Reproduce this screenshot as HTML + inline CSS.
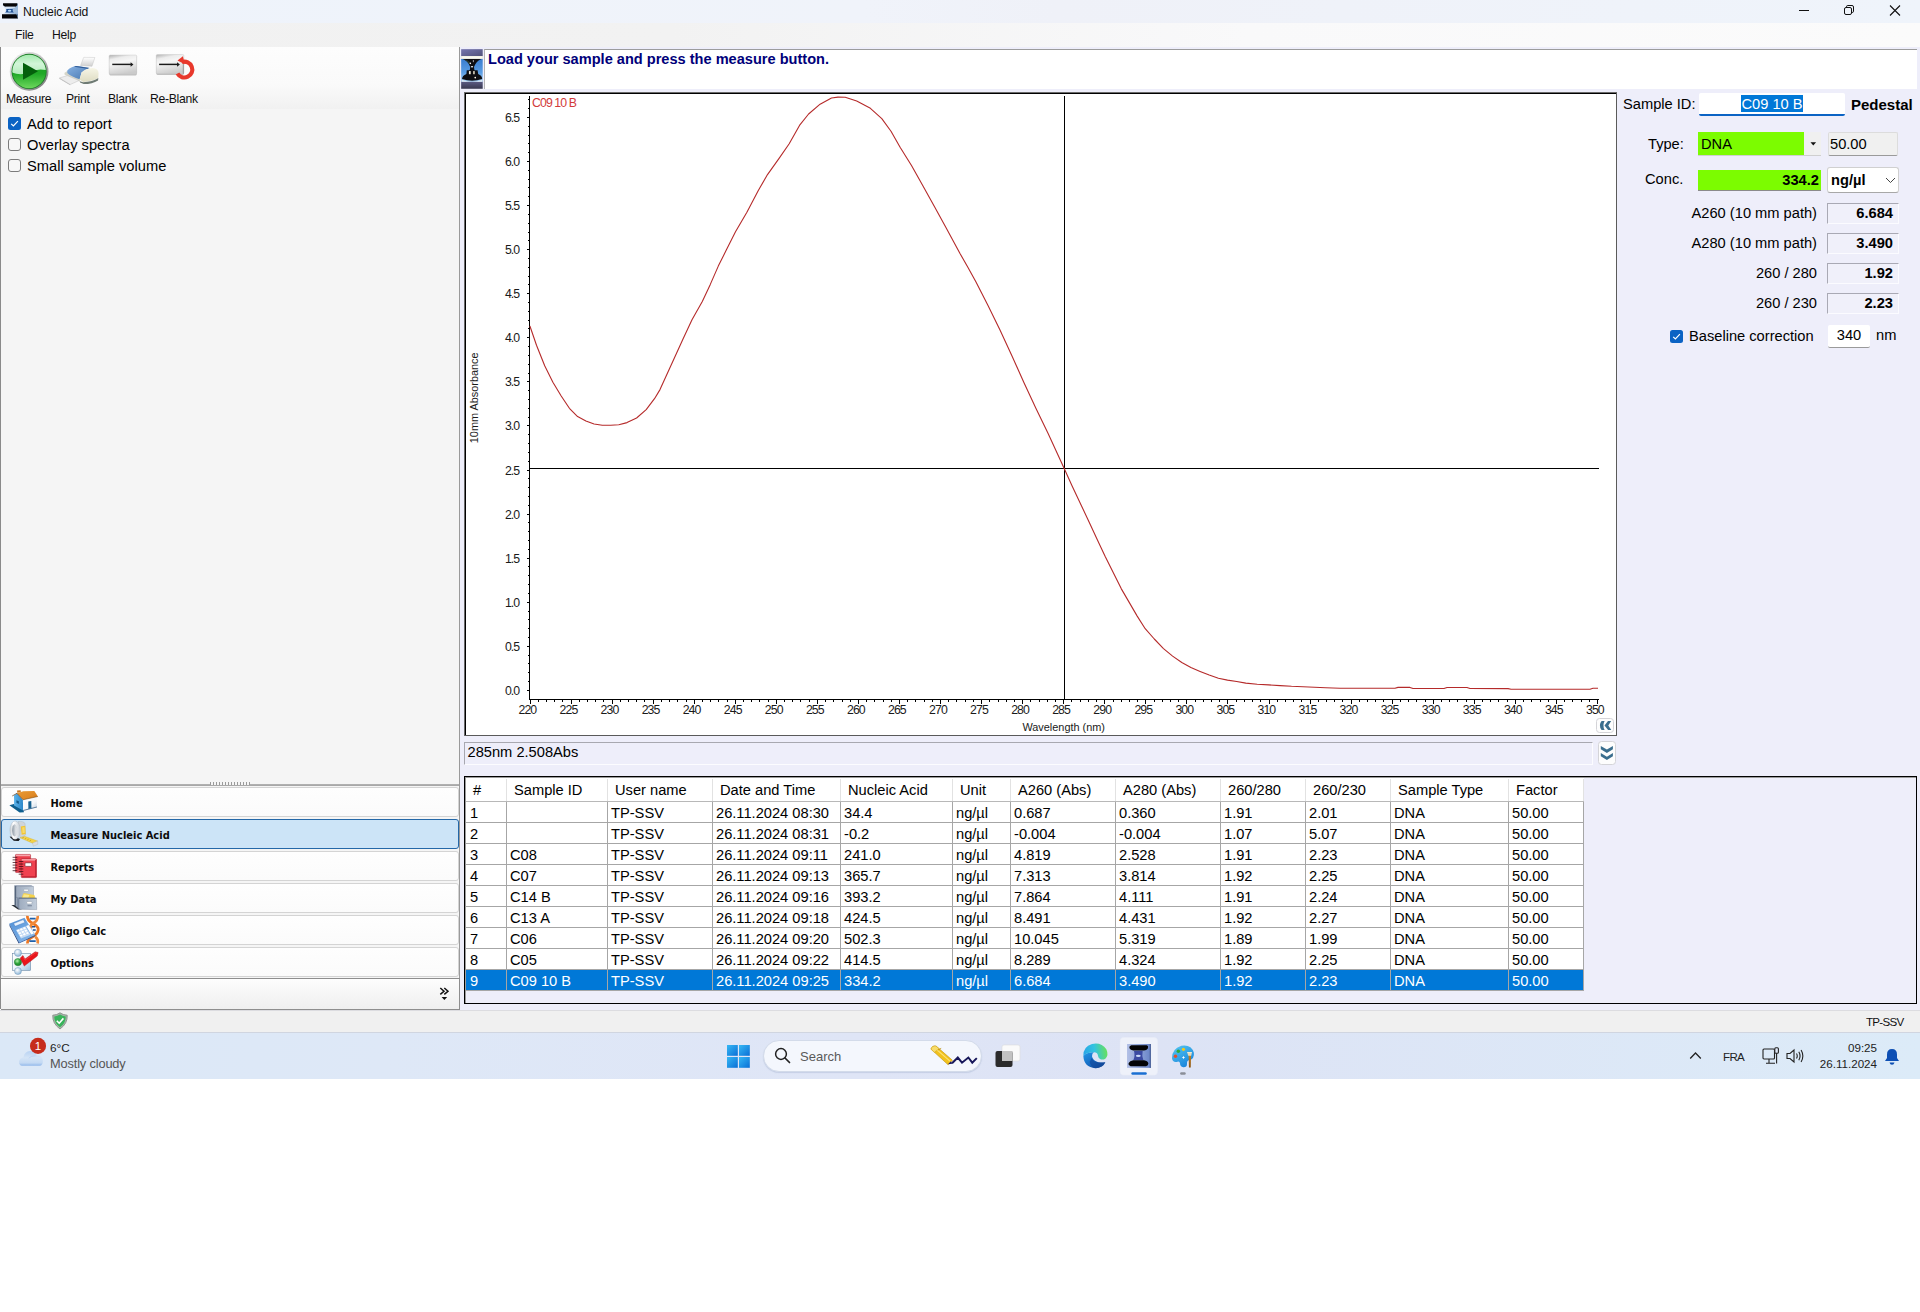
<!DOCTYPE html>
<html lang="en"><head><meta charset="utf-8"><title>Nucleic Acid</title>
<style>
*{box-sizing:border-box;margin:0;padding:0}
html,body{width:1920px;height:1312px;background:#fff;overflow:hidden}
body{font-family:"Liberation Sans",sans-serif;color:#000;position:relative}
.a{position:absolute}
.t{position:absolute;white-space:nowrap;line-height:1}
#titlebar{left:0;top:0;width:1920px;height:23px;background:linear-gradient(90deg,#eef3fb 0%,#f0f3fa 45%,#eff1f8 55%,#eff4fb 100%)}
#menubar{left:0;top:23px;width:1920px;height:24px;background:linear-gradient(90deg,#f1f1f1 0%,#f2f2f2 35%,#f9f9fa 65%,#fbfbfb 100%)}
#leftpanel{left:0;top:47px;width:460px;height:962px;background:#f5f5f5;border-left:1px solid #8a8a8a;border-right:1px solid #9a9a9a}
#ltool{left:0;top:0;width:458px;height:62px;background:linear-gradient(180deg,#fdfdfd 0%,#fafafa 60%,#f1f1f1 100%)}
#main{left:460px;top:47px;width:1460px;height:963px;background:#eeeefa}
#status{left:0;top:1010px;width:1920px;height:23px;background:#f0f0f0;border-top:1px solid #dcdce0;border-bottom:1px solid #d0d5e0}
#taskbar{left:0;top:1033px;width:1920px;height:46px;background:linear-gradient(90deg,#dbe8f7 0%,#dee8f7 20%,#dfe5f6 45%,#dde3f5 60%,#dcebf8 100%)}
.ui12{font-size:12px}
.ar{font-size:14.67px}
</style></head><body>

<div id="titlebar" class="a"></div>
<svg class="a" style="left:0;top:0" width="30" height="24" viewBox="0 0 1640 1312">
<defs><linearGradient id="ai" x1="0" y1="0" x2="1" y2="0"><stop offset="0" stop-color="#e8f1fb"/><stop offset="0.5" stop-color="#b9d2ee"/><stop offset="1" stop-color="#86a9cf"/></linearGradient></defs>
<rect x="120" y="200" width="860" height="800" fill="url(#ai)"/>
<polygon points="120,300 300,480 300,640 120,780" fill="#f2f7fd"/>
<polygon points="980,300 740,480 740,660 980,780" fill="#9dbbdc"/>
<polygon points="165,180 945,180 945,292 860,368 280,368 165,292" fill="#050507"/>
<polygon points="280,368 860,368 800,430 330,430" fill="#dfeaf6"/>
<path d="M340 495 H700 L690 560 Q690 620 760 690 H280 Q350 620 350 560 Z" fill="#1f4f92"/>
<ellipse cx="525" cy="585" rx="98" ry="52" fill="#b9dcfb"/>
<polygon points="110,780 900,780 985,1010 110,1010" fill="#050507"/>
<polygon points="900,780 985,780 985,1010" fill="#54708f"/>
</svg>
<div class="t" style="left:23px;top:6px;font-size:12.2px;letter-spacing:-0.1px;color:#111">Nucleic Acid</div>
<svg class="a" style="left:1790px;top:0" width="130" height="23" viewBox="0 0 130 23" fill="none" stroke="#111" stroke-width="1">
<path d="M9 10.5 H19"/>
<rect x="54.5" y="7.5" width="7" height="7" rx="1.5"/>
<path d="M56.5 7.5 V6.8 Q56.5 5.5 57.8 5.5 H62 Q63.5 5.5 63.5 7 V11.2 Q63.5 12.5 62.2 12.5 H61.5"/>
<path d="M100 5.5 L110 15.5 M110 5.5 L100 15.5" stroke-width="1.1"/>
</svg>
<div id="menubar" class="a"></div>
<div class="t" style="left:15px;top:29px;font-size:12.2px;letter-spacing:-0.25px;color:#111">File</div>
<div class="t" style="left:52px;top:29px;font-size:12.2px;letter-spacing:-0.25px;color:#111">Help</div>
<div id="leftpanel" class="a"><div id="ltool" class="a"></div></div>
<svg class="a" style="left:4px;top:48px" width="100" height="48" viewBox="0 0 1920 922">
<defs>
<linearGradient id="mr" x1="0.15" y1="0.1" x2="0.85" y2="0.9"><stop offset="0" stop-color="#e9e9e9"/><stop offset="0.5" stop-color="#bdbdbd"/><stop offset="1" stop-color="#7f7f7f"/></linearGradient>
<linearGradient id="mt" x1="0" y1="0" x2="0" y2="1"><stop offset="0" stop-color="#9be8a6"/><stop offset="0.5" stop-color="#d2f5d8"/><stop offset="1" stop-color="#b4ecbb"/></linearGradient>
<linearGradient id="mb" x1="0" y1="0" x2="0" y2="1"><stop offset="0" stop-color="#149a1c"/><stop offset="0.55" stop-color="#1fa826"/><stop offset="1" stop-color="#74dc62"/></linearGradient>
<clipPath id="mc"><circle cx="482" cy="450" r="322"/></clipPath>
<linearGradient id="pp" x1="0" y1="0" x2="0" y2="1"><stop offset="0" stop-color="#ffffff"/><stop offset="1" stop-color="#cfcfcf"/></linearGradient>
<linearGradient id="pb" x1="0" y1="0" x2="1" y2="1"><stop offset="0" stop-color="#86b1e2"/><stop offset="1" stop-color="#4877b0"/></linearGradient>
<linearGradient id="pc" x1="0" y1="0" x2="0" y2="1"><stop offset="0" stop-color="#f6f5e6"/><stop offset="1" stop-color="#dedcc2"/></linearGradient>
</defs>
<circle cx="482" cy="450" r="372" fill="url(#mr)"/>
<circle cx="482" cy="450" r="338" fill="#1d7a28"/>
<g clip-path="url(#mc)">
<rect x="150" y="120" width="680" height="680" fill="url(#mb)"/>
<path d="M150 100 H830 V430 Q650 380 482 470 Q320 540 150 470 Z" fill="url(#mt)"/>
</g>
<polygon points="365,285 365,612 652,446" fill="#04600c"/>
<polygon points="1530,180 1745,182 1690,352 1470,336" fill="url(#pp)" stroke="#bdbdbd" stroke-width="8"/>
<polygon points="1160,482 1215,440 1460,600 1458,645 1165,515" fill="#d6d6c9"/>
<path d="M1215 432 Q1300 338 1425 345 L1645 382 Q1560 402 1490 472 L1452 602 Q1300 560 1215 482 Z" fill="url(#pb)"/>
<path d="M1380 345 L1645 382 L1600 400 L1345 362 Z" fill="#2f5a94"/>
<path d="M1490 472 Q1560 396 1700 386 Q1812 400 1816 482 L1810 572 Q1700 642 1520 652 L1452 606 Z" fill="url(#pc)"/>
<path d="M1455 640 L1520 656 Q1700 650 1812 578 L1806 622 Q1700 692 1530 692 L1460 662 Z" fill="#6f7b74"/>
<polygon points="1065,575 1215,530 1442,625 1270,702" fill="#ededed" stroke="#b4b4b4" stroke-width="8"/>
<polygon points="1065,575 1270,702 1272,716 1062,590" fill="#b9b9b9"/>
</svg>
<svg class="a" style="left:100px;top:48px" width="100" height="48" viewBox="0 0 1920 922">
<defs>
<linearGradient id="bk" x1="0.2" y1="0" x2="0.5" y2="1"><stop offset="0" stop-color="#bdbdbd"/><stop offset="0.18" stop-color="#ececec"/><stop offset="0.4" stop-color="#f6f6f6"/><stop offset="1" stop-color="#cbcbcb"/></linearGradient>
</defs>
<rect x="178" y="150" width="528" height="378" rx="22" fill="#8f8f8f" opacity="0.55"/>
<rect x="175" y="135" width="530" height="368" rx="22" fill="url(#bk)" stroke="#c4c4c4" stroke-width="8"/>
<path d="M235 315 H600" stroke="#1a1a1a" stroke-width="28"/><polygon points="588,272 642,315 588,358" fill="#1a1a1a"/>
<rect x="1083" y="140" width="528" height="378" rx="22" fill="#8f8f8f" opacity="0.55"/>
<rect x="1080" y="125" width="530" height="372" rx="22" fill="url(#bk)" stroke="#c4c4c4" stroke-width="8"/>
<rect x="1590" y="280" width="20" height="215" fill="#9a9a9a"/>
<path d="M1135 315 H1495" stroke="#1a1a1a" stroke-width="28"/><polygon points="1480,272 1534,315 1480,358" fill="#1a1a1a"/>
<path d="M1574 270 A152 152 0 1 1 1488 490" fill="none" stroke="#e8382c" stroke-width="80"/>
<polygon points="1488,238 1592,160 1628,310" fill="#e8382c"/>
</svg>
<div class="t" style="left:6px;top:93px;font-size:12.2px;letter-spacing:-0.3px;color:#111">Measure</div>
<div class="t" style="left:66px;top:93px;font-size:12.2px;letter-spacing:-0.3px;color:#111">Print</div>
<div class="t" style="left:108px;top:93px;font-size:12.2px;letter-spacing:-0.3px;color:#111">Blank</div>
<div class="t" style="left:150px;top:93px;font-size:12.2px;letter-spacing:-0.3px;color:#111">Re-Blank</div>
<svg class="a" style="left:8px;top:117px" width="13" height="13" viewBox="0 0 13 13"><rect x="0" y="0" width="13" height="13" rx="2.5" fill="#0b63c4"/><path d="M3.2 6.8 L5.4 9 L9.9 4.2" fill="none" stroke="#fff" stroke-width="1.2"/></svg>
<div class="t ar" style="left:27px;top:117px">Add to report</div>
<svg class="a" style="left:8px;top:138px" width="13" height="13" viewBox="0 0 13 13"><rect x="0.5" y="0.5" width="12" height="12" rx="2.5" fill="#f7f7f7" stroke="#7c7c7c" stroke-width="1"/></svg>
<div class="t ar" style="left:27px;top:138px">Overlay spectra</div>
<svg class="a" style="left:8px;top:159px" width="13" height="13" viewBox="0 0 13 13"><rect x="0.5" y="0.5" width="12" height="12" rx="2.5" fill="#f7f7f7" stroke="#7c7c7c" stroke-width="1"/></svg>
<div class="t ar" style="left:27px;top:159px">Small sample volume</div>
<div class="a" style="left:1px;top:784px;width:458px;height:2px;background:linear-gradient(180deg,#b4b4b4,#a4a4a4)"></div>
<div class="a" style="left:210px;top:782px;width:40px;height:3px;background:repeating-linear-gradient(90deg,#9a9a9a 0 1px,#f5f5f5 1px 3px)"></div>
<div class="a" style="left:1px;top:787px;width:458px;height:30px;border-radius:3px;background:linear-gradient(180deg,#fefefe,#fbfbfb);border:1px solid #d4d4d4"><div class="t" style="left:48.5px;top:10px;font-family:'DejaVu Sans Condensed','DejaVu Sans','Liberation Sans',sans-serif;font-stretch:condensed;font-weight:bold;font-size:11px;color:#0c0c0c">Home</div></div>
<div class="a" style="left:1px;top:819px;width:458px;height:30px;border-radius:3px;background:#cce4f7;border:1px solid #2468a8"><div class="t" style="left:48.5px;top:10px;font-family:'DejaVu Sans Condensed','DejaVu Sans','Liberation Sans',sans-serif;font-stretch:condensed;font-weight:bold;font-size:11px;color:#0c0c0c">Measure Nucleic Acid</div></div>
<div class="a" style="left:1px;top:851px;width:458px;height:30px;border-radius:3px;background:linear-gradient(180deg,#fefefe,#fbfbfb);border:1px solid #d4d4d4"><div class="t" style="left:48.5px;top:10px;font-family:'DejaVu Sans Condensed','DejaVu Sans','Liberation Sans',sans-serif;font-stretch:condensed;font-weight:bold;font-size:11px;color:#0c0c0c">Reports</div></div>
<div class="a" style="left:1px;top:883px;width:458px;height:30px;border-radius:3px;background:linear-gradient(180deg,#fefefe,#fbfbfb);border:1px solid #d4d4d4"><div class="t" style="left:48.5px;top:10px;font-family:'DejaVu Sans Condensed','DejaVu Sans','Liberation Sans',sans-serif;font-stretch:condensed;font-weight:bold;font-size:11px;color:#0c0c0c">My Data</div></div>
<div class="a" style="left:1px;top:915px;width:458px;height:30px;border-radius:3px;background:linear-gradient(180deg,#fefefe,#fbfbfb);border:1px solid #d4d4d4"><div class="t" style="left:48.5px;top:10px;font-family:'DejaVu Sans Condensed','DejaVu Sans','Liberation Sans',sans-serif;font-stretch:condensed;font-weight:bold;font-size:11px;color:#0c0c0c">Oligo Calc</div></div>
<div class="a" style="left:1px;top:947px;width:458px;height:30px;border-radius:3px;background:linear-gradient(180deg,#fefefe,#fbfbfb);border:1px solid #d4d4d4"><div class="t" style="left:48.5px;top:10px;font-family:'DejaVu Sans Condensed','DejaVu Sans','Liberation Sans',sans-serif;font-stretch:condensed;font-weight:bold;font-size:11px;color:#0c0c0c">Options</div></div>
<svg class="a" style="left:4px;top:786px" width="40" height="64" viewBox="0 0 820 1312">
<defs>
<linearGradient id="hw1" x1="0" y1="0" x2="1" y2="0"><stop offset="0" stop-color="#5db4ea"/><stop offset="1" stop-color="#2b86c8"/></linearGradient>
<linearGradient id="hw2" x1="0" y1="0" x2="1" y2="1"><stop offset="0" stop-color="#ffffff"/><stop offset="0.6" stop-color="#f4f7fa"/><stop offset="1" stop-color="#b9c9d9"/></linearGradient>
<linearGradient id="hr" x1="0" y1="0" x2="1" y2="1"><stop offset="0" stop-color="#e89a35"/><stop offset="0.6" stop-color="#e08a26"/><stop offset="1" stop-color="#c96f16"/></linearGradient>
<linearGradient id="tp1" x1="0" y1="0" x2="1" y2="0"><stop offset="0" stop-color="#c9d0d6"/><stop offset="0.35" stop-color="#ffffff"/><stop offset="1" stop-color="#c4cbd2"/></linearGradient>
<linearGradient id="tp2" x1="0" y1="0" x2="1" y2="0"><stop offset="0" stop-color="#8d98a3"/><stop offset="1" stop-color="#f3f5f7"/></linearGradient>
</defs>
<polygon points="110,395 200,368 395,470 410,540 320,545" fill="#0f5f8e"/>
<polygon points="205,195 265,150 388,290 392,500 207,402" fill="url(#hw1)"/>
<polygon points="255,292 305,312 305,368 255,345" fill="#135a8a"/>
<polygon points="388,290 668,235 675,435 392,505" fill="url(#hw2)"/>
<polygon points="392,490 675,420 675,440 392,510" fill="#5b7e9e"/>
<polygon points="498,318 560,305 562,455 500,470" fill="#17608f"/>
<polygon points="268,92 340,85 345,128 272,140" fill="#c8741c"/>
<polygon points="265,150 395,108 622,104 695,215 392,282" fill="url(#hr)"/>
<path d="M392 282 L695 215" stroke="#7a4a10" stroke-width="12"/>
<path d="M168 205 L265 150 L392 284" stroke="#5b3714" stroke-width="14" fill="none"/>
<polygon points="115,1040 185,1030 330,1085 300,1128 200,1120" fill="#15171a"/>
<path d="M290 728 Q410 715 432 775 L442 1005 L330 1062 Z" fill="#cfd5db" stroke="#9aa3ac" stroke-width="6"/>
<polygon points="345,830 435,815 445,985 362,1000" fill="#f2c531"/>
<polygon points="372,850 420,842 428,960 380,970" fill="#f7da6a"/>
<ellipse cx="228" cy="905" rx="106" ry="188" fill="url(#tp1)" stroke="#a4adb6" stroke-width="7"/>
<ellipse cx="215" cy="908" rx="47" ry="120" fill="url(#tp2)" stroke="#9aa3ac" stroke-width="5"/>
<polygon points="325,1062 420,1030 690,1130 600,1178" fill="#f4d348" stroke="#c9a21f" stroke-width="6"/>
<path d="M405 1052 l-28 14 M455 1072 l-28 14 M505 1092 l-28 14 M555 1110 l-28 14" stroke="#9a7d15" stroke-width="10"/>
<polygon points="585,1168 690,1125 695,1195 600,1235" fill="#d9dde1" stroke="#a5acb3" stroke-width="6"/>
</svg>
<svg class="a" style="left:4px;top:850px" width="40" height="64" viewBox="0 0 820 1312">
<defs>
<linearGradient id="cb1" x1="0" y1="0" x2="1" y2="0"><stop offset="0" stop-color="#9eacbf"/><stop offset="1" stop-color="#c3cedb"/></linearGradient>
</defs>
<rect x="235" y="90" width="310" height="372" rx="14" fill="#ea3f4c" stroke="#9c1926" stroke-width="9"/>
<rect x="245" y="98" width="290" height="30" fill="#f8a5ac"/>
<path d="M185 150 h80 M185 202 h80 M185 256 h80 M185 310 h80 M185 366 h80 M185 424 h80" stroke="#3a0810" stroke-width="15" stroke-linecap="round"/>
<rect x="352" y="180" width="314" height="386" rx="16" fill="#f0414f" stroke="#9c1926" stroke-width="10"/>
<rect x="362" y="188" width="292" height="28" fill="#f9a8ae"/>
<rect x="640" y="200" width="22" height="350" fill="#b81f2e"/><rect x="370" y="540" width="290" height="20" fill="#b81f2e"/>
<rect x="430" y="262" width="136" height="74" rx="20" fill="#fff" stroke="#7a1420" stroke-width="13"/>
<path d="M310 236 h78 M310 288 h78 M310 338 h78 M310 388 h78 M310 442 h78 M310 496 h78" stroke="#3a0810" stroke-width="15" stroke-linecap="round"/>
<polygon points="150,1130 215,1128 365,1215 290,1222" fill="#2a3038"/>
<polygon points="215,725 252,742 252,1152 215,1132" fill="#55657c"/>
<polygon points="215,725 558,722 606,746 252,746" fill="#8796ac"/>
<rect x="252" y="746" width="354" height="235" fill="url(#cb1)" stroke="#5f6f86" stroke-width="6"/>
<rect x="405" y="806" width="96" height="40" rx="7" fill="#fff" stroke="#7b8797" stroke-width="7"/>
<polygon points="252,962 306,986 311,1216 252,1152" fill="#7f8ea4"/>
<path d="M365 980 L392 895 Q402 880 432 886 L618 922 Q640 932 632 986 Z" fill="#f5d24a"/>
<path d="M385 975 L405 905 L520 925 L500 980 Z" fill="#fbe88c"/>
<polygon points="306,986 666,986 671,1222 311,1216" fill="url(#cb1)" stroke="#5f6f86" stroke-width="7"/>
<rect x="306" y="980" width="360" height="14" fill="#4f5d72"/>
<rect x="466" y="1056" width="110" height="50" rx="22" fill="#fff" stroke="#7b8797" stroke-width="8"/>
<rect x="482" y="1132" width="90" height="22" fill="#76849a"/>
</svg>
<svg class="a" style="left:4px;top:914px" width="40" height="64" viewBox="0 0 820 1312">
<defs>
<linearGradient id="cal" x1="0" y1="0" x2="1" y2="1"><stop offset="0" stop-color="#4f8fd6"/><stop offset="1" stop-color="#8dbcec"/></linearGradient>
<linearGradient id="op1" x1="0" y1="0" x2="1" y2="1"><stop offset="0" stop-color="#ffffff"/><stop offset="0.5" stop-color="#eef5fb"/><stop offset="1" stop-color="#9cc3e0"/></linearGradient>
<radialGradient id="opc" cx="40%" cy="35%" r="70%"><stop offset="0" stop-color="#ffffff"/><stop offset="1" stop-color="#86b2d6"/></radialGradient>
<radialGradient id="opg" cx="40%" cy="35%" r="70%"><stop offset="0" stop-color="#b6f0b0"/><stop offset="0.5" stop-color="#2fa53c"/><stop offset="1" stop-color="#157a24"/></radialGradient>
</defs>
<path d="M480 40 Q470 130 590 195 Q715 255 700 330 Q680 420 590 465 Q475 520 480 605" fill="none" stroke="#ee7722" stroke-width="56"/>
<path d="M690 40 Q705 130 590 195 Q520 235 560 300 M640 470 Q710 520 690 605" fill="none" stroke="#f08a3a" stroke-width="56"/>
<path d="M528 95 h120 M520 555 h130" stroke="#1f5fa8" stroke-width="34"/>
<path d="M570 262 h70 M590 330 h60" stroke="#1f4f90" stroke-width="30"/>
<polygon points="105,200 420,75 640,430 310,585" fill="url(#cal)"/>
<polygon points="105,200 118,250 302,603 310,585" fill="#183c7c"/>
<polygon points="310,585 640,430 646,452 302,606" fill="#2b5ea8"/>
<polygon points="195,195 395,115 430,172 230,252" fill="#eaf3fd" stroke="#2f68b4" stroke-width="8"/>
<polygon points="245,330 440,250 545,425 350,500" fill="#c4daf4"/>
<g fill="#ffffff">
<polygon points="262,335 305,318 325,350 282,368"/><polygon points="325,310 368,292 388,325 345,343"/><polygon points="388,284 430,267 450,300 408,317"/>
<polygon points="292,385 335,368 355,400 312,418"/><polygon points="355,360 398,342 418,375 375,393"/><polygon points="418,334 460,317 480,350 438,367"/>
<polygon points="322,435 365,418 385,450 342,468"/><polygon points="385,410 428,392 448,425 405,443"/><polygon points="448,384 490,367 510,400 468,417"/>
<polygon points="452,245 505,225 612,400 558,422"/>
</g>
<rect x="172" y="806" width="372" height="350" fill="url(#op1)" stroke="#5f7f9f" stroke-width="11"/>
<circle cx="286" cy="796" r="74" fill="url(#opc)" stroke="#6f93b5" stroke-width="9"/>
<circle cx="286" cy="1170" r="72" fill="url(#opc)" stroke="#6f93b5" stroke-width="9"/>
<circle cx="286" cy="986" r="76" fill="url(#opg)" stroke="#15702a" stroke-width="8"/>
<path d="M330 905 L388 850 L430 925 L640 772 L700 790 L682 862 L415 1068 L362 962 Z" fill="#ea141b" stroke="#a50d12" stroke-width="8"/>
<path d="M395 880 L432 945 L640 795 L680 800" fill="none" stroke="#f86a6a" stroke-width="10"/>
</svg>
<div class="a" style="left:1px;top:978px;width:459px;height:32px;background:linear-gradient(180deg,#fdfdfd,#efefef);border:1px solid #8e8e8e;border-left:none"></div>
<svg class="a" style="left:438px;top:986px" width="12" height="15" viewBox="0 0 12 15"><path d="M2.3 2 L6 5.2 L2.3 8.4 M6.3 2 L10 5.2 L6.3 8.4" fill="none" stroke="#111" stroke-width="1.5"/><polygon points="3.6,11 9.2,11 6.4,14" fill="#111"/></svg>
<div id="main" class="a"></div>
<svg class="a" style="left:458px;top:46px" width="30" height="46" viewBox="0 0 856 1312">
<defs>
<linearGradient id="gi1" x1="0" y1="0" x2="1" y2="1"><stop offset="0" stop-color="#7676ae"/><stop offset="1" stop-color="#52527a"/></linearGradient>
<linearGradient id="gi2" x1="0" y1="0" x2="0" y2="1"><stop offset="0" stop-color="#3a7ccf"/><stop offset="0.6" stop-color="#5b9ee4"/><stop offset="1" stop-color="#a6cff2"/></linearGradient>
<linearGradient id="gi3" x1="0" y1="0" x2="0" y2="1"><stop offset="0" stop-color="#5a5a82"/><stop offset="1" stop-color="#38384f"/></linearGradient>
</defs>
<rect x="90" y="90" width="615" height="200" fill="url(#gi1)"/>
<rect x="90" y="365" width="615" height="660" fill="url(#gi2)"/>
<rect x="90" y="285" width="615" height="82" fill="#ecebdc"/>
<rect x="120" y="300" width="560" height="40" fill="#fbfaf0"/>
<rect x="90" y="1020" width="615" height="200" fill="url(#gi3)"/>
<path d="M110 960 Q400 1075 690 960 L690 1020 L110 1020 Z" fill="#dfe9f2"/>
<path d="M140 372 H665 Q520 430 455 600 L470 690 H560 L575 800 Q690 850 690 940 Q400 1040 115 940 Q120 850 240 800 L250 690 H335 L350 600 Q290 430 140 372 Z" fill="#0e0e12"/>
<path d="M150 380 Q300 400 345 480 L330 520 Q260 420 150 380 Z" fill="#2a3a30"/>
<rect x="312" y="715" width="50" height="90" fill="#f4efe0"/><rect x="432" y="715" width="46" height="90" fill="#d9d2bd"/>
<circle cx="352" cy="495" r="22" fill="#ffffff"/><ellipse cx="400" cy="590" rx="34" ry="22" fill="#e8eef4"/>
<circle cx="492" cy="900" r="24" fill="#fff8e8"/>
<rect x="425" y="400" width="22" height="60" fill="#cfcfd8"/>
</svg>
<div class="a" style="left:484px;top:49px;width:1433px;height:40px;background:#fff;border-top:1px solid #9c9c9c;border-left:1px solid #b4b4b4"></div>
<div class="t" style="left:488px;top:52px;font-size:14.58px;font-weight:bold;color:#00007a">Load your sample and press the measure button.</div>
<svg class="a" style="left:464px;top:92px" width="1154" height="645" viewBox="464 92 1154 645"><rect x="464" y="92" width="1153" height="644" fill="#fff"/><g shape-rendering="crispEdges"><rect x="464" y="92" width="1153" height="1" fill="#6a6a6a"/><rect x="464" y="92" width="1" height="644" fill="#6a6a6a"/><rect x="465" y="93" width="1151" height="1" fill="#000"/><rect x="465" y="93" width="1" height="642" fill="#000"/><rect x="1616" y="93" width="1" height="643" fill="#5a5a5a"/><rect x="465" y="735" width="1152" height="1" fill="#5a5a5a"/></g><g shape-rendering="crispEdges" fill="#000"><rect x="529" y="96" width="1" height="604"/><rect x="529" y="699" width="1070" height="1"/><rect x="527" y="690" width="2" height="1"/><rect x="528" y="681" width="1" height="1"/><rect x="528" y="672" width="1" height="1"/><rect x="528" y="663" width="1" height="1"/><rect x="528" y="655" width="1" height="1"/><rect x="527" y="646" width="2" height="1"/><rect x="528" y="637" width="1" height="1"/><rect x="528" y="628" width="1" height="1"/><rect x="528" y="619" width="1" height="1"/><rect x="528" y="611" width="1" height="1"/><rect x="527" y="602" width="2" height="1"/><rect x="528" y="593" width="1" height="1"/><rect x="528" y="584" width="1" height="1"/><rect x="528" y="575" width="1" height="1"/><rect x="528" y="566" width="1" height="1"/><rect x="527" y="558" width="2" height="1"/><rect x="528" y="549" width="1" height="1"/><rect x="528" y="540" width="1" height="1"/><rect x="528" y="531" width="1" height="1"/><rect x="528" y="522" width="1" height="1"/><rect x="527" y="514" width="2" height="1"/><rect x="528" y="505" width="1" height="1"/><rect x="528" y="496" width="1" height="1"/><rect x="528" y="487" width="1" height="1"/><rect x="528" y="478" width="1" height="1"/><rect x="527" y="470" width="2" height="1"/><rect x="528" y="461" width="1" height="1"/><rect x="528" y="452" width="1" height="1"/><rect x="528" y="443" width="1" height="1"/><rect x="528" y="434" width="1" height="1"/><rect x="527" y="425" width="2" height="1"/><rect x="528" y="417" width="1" height="1"/><rect x="528" y="408" width="1" height="1"/><rect x="528" y="399" width="1" height="1"/><rect x="528" y="390" width="1" height="1"/><rect x="527" y="381" width="2" height="1"/><rect x="528" y="373" width="1" height="1"/><rect x="528" y="364" width="1" height="1"/><rect x="528" y="355" width="1" height="1"/><rect x="528" y="346" width="1" height="1"/><rect x="527" y="337" width="2" height="1"/><rect x="528" y="328" width="1" height="1"/><rect x="528" y="320" width="1" height="1"/><rect x="528" y="311" width="1" height="1"/><rect x="528" y="302" width="1" height="1"/><rect x="527" y="293" width="2" height="1"/><rect x="528" y="284" width="1" height="1"/><rect x="528" y="276" width="1" height="1"/><rect x="528" y="267" width="1" height="1"/><rect x="528" y="258" width="1" height="1"/><rect x="527" y="249" width="2" height="1"/><rect x="528" y="240" width="1" height="1"/><rect x="528" y="232" width="1" height="1"/><rect x="528" y="223" width="1" height="1"/><rect x="528" y="214" width="1" height="1"/><rect x="527" y="205" width="2" height="1"/><rect x="528" y="196" width="1" height="1"/><rect x="528" y="187" width="1" height="1"/><rect x="528" y="179" width="1" height="1"/><rect x="528" y="170" width="1" height="1"/><rect x="527" y="161" width="2" height="1"/><rect x="528" y="152" width="1" height="1"/><rect x="528" y="143" width="1" height="1"/><rect x="528" y="135" width="1" height="1"/><rect x="528" y="126" width="1" height="1"/><rect x="527" y="117" width="2" height="1"/><rect x="528" y="108" width="1" height="1"/><rect x="528" y="99" width="1" height="1"/><rect x="530" y="700" width="1" height="4"/><rect x="538" y="700" width="1" height="2"/><rect x="546" y="700" width="1" height="2"/><rect x="554" y="700" width="1" height="2"/><rect x="562" y="700" width="1" height="2"/><rect x="571" y="700" width="1" height="4"/><rect x="579" y="700" width="1" height="2"/><rect x="587" y="700" width="1" height="2"/><rect x="595" y="700" width="1" height="2"/><rect x="603" y="700" width="1" height="2"/><rect x="612" y="700" width="1" height="4"/><rect x="620" y="700" width="1" height="2"/><rect x="628" y="700" width="1" height="2"/><rect x="636" y="700" width="1" height="2"/><rect x="644" y="700" width="1" height="2"/><rect x="653" y="700" width="1" height="4"/><rect x="661" y="700" width="1" height="2"/><rect x="669" y="700" width="1" height="2"/><rect x="677" y="700" width="1" height="2"/><rect x="686" y="700" width="1" height="2"/><rect x="694" y="700" width="1" height="4"/><rect x="702" y="700" width="1" height="2"/><rect x="710" y="700" width="1" height="2"/><rect x="718" y="700" width="1" height="2"/><rect x="727" y="700" width="1" height="2"/><rect x="735" y="700" width="1" height="4"/><rect x="743" y="700" width="1" height="2"/><rect x="751" y="700" width="1" height="2"/><rect x="759" y="700" width="1" height="2"/><rect x="768" y="700" width="1" height="2"/><rect x="776" y="700" width="1" height="4"/><rect x="784" y="700" width="1" height="2"/><rect x="792" y="700" width="1" height="2"/><rect x="800" y="700" width="1" height="2"/><rect x="809" y="700" width="1" height="2"/><rect x="817" y="700" width="1" height="4"/><rect x="825" y="700" width="1" height="2"/><rect x="833" y="700" width="1" height="2"/><rect x="842" y="700" width="1" height="2"/><rect x="850" y="700" width="1" height="2"/><rect x="858" y="700" width="1" height="4"/><rect x="866" y="700" width="1" height="2"/><rect x="874" y="700" width="1" height="2"/><rect x="883" y="700" width="1" height="2"/><rect x="891" y="700" width="1" height="2"/><rect x="899" y="700" width="1" height="4"/><rect x="907" y="700" width="1" height="2"/><rect x="915" y="700" width="1" height="2"/><rect x="924" y="700" width="1" height="2"/><rect x="932" y="700" width="1" height="2"/><rect x="940" y="700" width="1" height="4"/><rect x="948" y="700" width="1" height="2"/><rect x="956" y="700" width="1" height="2"/><rect x="965" y="700" width="1" height="2"/><rect x="973" y="700" width="1" height="2"/><rect x="981" y="700" width="1" height="4"/><rect x="989" y="700" width="1" height="2"/><rect x="998" y="700" width="1" height="2"/><rect x="1006" y="700" width="1" height="2"/><rect x="1014" y="700" width="1" height="2"/><rect x="1022" y="700" width="1" height="4"/><rect x="1030" y="700" width="1" height="2"/><rect x="1039" y="700" width="1" height="2"/><rect x="1047" y="700" width="1" height="2"/><rect x="1055" y="700" width="1" height="2"/><rect x="1063" y="700" width="1" height="4"/><rect x="1071" y="700" width="1" height="2"/><rect x="1080" y="700" width="1" height="2"/><rect x="1088" y="700" width="1" height="2"/><rect x="1096" y="700" width="1" height="2"/><rect x="1104" y="700" width="1" height="4"/><rect x="1113" y="700" width="1" height="2"/><rect x="1121" y="700" width="1" height="2"/><rect x="1129" y="700" width="1" height="2"/><rect x="1137" y="700" width="1" height="2"/><rect x="1145" y="700" width="1" height="4"/><rect x="1154" y="700" width="1" height="2"/><rect x="1162" y="700" width="1" height="2"/><rect x="1170" y="700" width="1" height="2"/><rect x="1178" y="700" width="1" height="2"/><rect x="1186" y="700" width="1" height="4"/><rect x="1195" y="700" width="1" height="2"/><rect x="1203" y="700" width="1" height="2"/><rect x="1211" y="700" width="1" height="2"/><rect x="1219" y="700" width="1" height="2"/><rect x="1227" y="700" width="1" height="4"/><rect x="1236" y="700" width="1" height="2"/><rect x="1244" y="700" width="1" height="2"/><rect x="1252" y="700" width="1" height="2"/><rect x="1260" y="700" width="1" height="2"/><rect x="1269" y="700" width="1" height="4"/><rect x="1277" y="700" width="1" height="2"/><rect x="1285" y="700" width="1" height="2"/><rect x="1293" y="700" width="1" height="2"/><rect x="1301" y="700" width="1" height="2"/><rect x="1310" y="700" width="1" height="4"/><rect x="1318" y="700" width="1" height="2"/><rect x="1326" y="700" width="1" height="2"/><rect x="1334" y="700" width="1" height="2"/><rect x="1342" y="700" width="1" height="2"/><rect x="1351" y="700" width="1" height="4"/><rect x="1359" y="700" width="1" height="2"/><rect x="1367" y="700" width="1" height="2"/><rect x="1375" y="700" width="1" height="2"/><rect x="1383" y="700" width="1" height="2"/><rect x="1392" y="700" width="1" height="4"/><rect x="1400" y="700" width="1" height="2"/><rect x="1408" y="700" width="1" height="2"/><rect x="1416" y="700" width="1" height="2"/><rect x="1425" y="700" width="1" height="2"/><rect x="1433" y="700" width="1" height="4"/><rect x="1441" y="700" width="1" height="2"/><rect x="1449" y="700" width="1" height="2"/><rect x="1457" y="700" width="1" height="2"/><rect x="1466" y="700" width="1" height="2"/><rect x="1474" y="700" width="1" height="4"/><rect x="1482" y="700" width="1" height="2"/><rect x="1490" y="700" width="1" height="2"/><rect x="1498" y="700" width="1" height="2"/><rect x="1507" y="700" width="1" height="2"/><rect x="1515" y="700" width="1" height="4"/><rect x="1523" y="700" width="1" height="2"/><rect x="1531" y="700" width="1" height="2"/><rect x="1540" y="700" width="1" height="2"/><rect x="1548" y="700" width="1" height="2"/><rect x="1556" y="700" width="1" height="4"/><rect x="1564" y="700" width="1" height="2"/><rect x="1572" y="700" width="1" height="2"/><rect x="1581" y="700" width="1" height="2"/><rect x="1589" y="700" width="1" height="2"/><rect x="1597" y="700" width="1" height="4"/><rect x="1064" y="96" width="1" height="604"/><rect x="530" y="468" width="1069" height="1"/></g><g font-family="Liberation Sans, sans-serif" font-size="12.3" fill="#1a1a1a" letter-spacing="-0.9"><text x="519.3" y="695" text-anchor="end">0.0</text><text x="519.3" y="651" text-anchor="end">0.5</text><text x="519.3" y="607" text-anchor="end">1.0</text><text x="519.3" y="563" text-anchor="end">1.5</text><text x="519.3" y="519" text-anchor="end">2.0</text><text x="519.3" y="475" text-anchor="end">2.5</text><text x="519.3" y="430" text-anchor="end">3.0</text><text x="519.3" y="386" text-anchor="end">3.5</text><text x="519.3" y="342" text-anchor="end">4.0</text><text x="519.3" y="298" text-anchor="end">4.5</text><text x="519.3" y="254" text-anchor="end">5.0</text><text x="519.3" y="210" text-anchor="end">5.5</text><text x="519.3" y="166" text-anchor="end">6.0</text><text x="519.3" y="122" text-anchor="end">6.5</text><text x="527.4" y="714" text-anchor="middle">220</text><text x="568.5" y="714" text-anchor="middle">225</text><text x="609.5" y="714" text-anchor="middle">230</text><text x="650.6" y="714" text-anchor="middle">235</text><text x="691.6" y="714" text-anchor="middle">240</text><text x="732.7" y="714" text-anchor="middle">245</text><text x="773.7" y="714" text-anchor="middle">250</text><text x="814.8" y="714" text-anchor="middle">255</text><text x="855.9" y="714" text-anchor="middle">260</text><text x="896.9" y="714" text-anchor="middle">265</text><text x="938.0" y="714" text-anchor="middle">270</text><text x="979.0" y="714" text-anchor="middle">275</text><text x="1020.1" y="714" text-anchor="middle">280</text><text x="1061.1" y="714" text-anchor="middle">285</text><text x="1102.2" y="714" text-anchor="middle">290</text><text x="1143.3" y="714" text-anchor="middle">295</text><text x="1184.3" y="714" text-anchor="middle">300</text><text x="1225.4" y="714" text-anchor="middle">305</text><text x="1266.4" y="714" text-anchor="middle">310</text><text x="1307.5" y="714" text-anchor="middle">315</text><text x="1348.5" y="714" text-anchor="middle">320</text><text x="1389.6" y="714" text-anchor="middle">325</text><text x="1430.7" y="714" text-anchor="middle">330</text><text x="1471.7" y="714" text-anchor="middle">335</text><text x="1512.8" y="714" text-anchor="middle">340</text><text x="1553.8" y="714" text-anchor="middle">345</text><text x="1594.9" y="714" text-anchor="middle">350</text><text x="1063.7" y="730.6" text-anchor="middle" font-size="10.9" letter-spacing="0">Wavelength (nm)</text><text x="0" y="0" transform="translate(478.3 397.8) rotate(-90)" text-anchor="middle" font-size="10.9" letter-spacing="0">10mm Absorbance</text><text x="532" y="107" fill="#d23a3a">C09 10 B</text></g><polyline points="529.9,326.0 536.5,345.2 544.7,365.8 552.9,382.3 561.2,396.0 569.4,408.3 577.6,416.6 585.9,421.0 594.1,424.0 602.3,425.3 610.6,425.3 618.8,424.8 627.0,422.6 636.6,418.0 646.2,409.7 654.5,398.7 660.0,389.6 671.4,364.4 682.9,339.3 692.0,319.8 702.3,301.5 710.3,284.4 718.3,266.1 726.3,250.1 735.5,231.8 746.9,212.3 758.3,190.6 767.5,174.6 778.9,158.6 789.2,143.7 799.5,125.4 808.6,114.0 820.1,104.2 831.5,98.0 838.0,97.1 845.2,97.3 856.7,101.0 870.4,108.3 881.8,118.6 891.0,131.2 900.1,147.2 911.5,165.5 923.0,186.0 934.4,206.6 945.8,227.2 960.0,253.5 968.0,267.5 976.0,282.0 988.0,305.5 1000.0,330.0 1012.0,356.0 1024.0,382.8 1036.0,408.5 1048.0,433.2 1064.2,468.4 1072.0,485.7 1081.2,505.2 1089.2,522.3 1097.2,539.5 1105.2,556.6 1113.2,572.6 1121.2,588.6 1129.2,602.4 1137.2,616.1 1145.2,628.7 1154.3,639.0 1163.5,648.6 1172.6,656.1 1181.8,662.5 1190.9,667.5 1200.1,671.4 1209.2,675.1 1218.4,678.3 1227.5,680.1 1236.7,681.5 1245.8,683.1 1257.2,684.2 1268.7,684.9 1280.1,685.6 1291.5,686.3 1303.0,686.7 1314.4,687.2 1325.8,687.7 1340.0,688.3 1395.0,688.3 1398.0,687.4 1410.0,687.4 1413.0,688.5 1444.0,688.5 1447.0,687.5 1467.0,687.5 1470.0,688.5 1508.0,688.6 1511.0,689.3 1590.0,689.3 1593.0,688.3 1598.0,688.3" fill="none" stroke="#b52a2a" stroke-width="1.1" stroke-linejoin="round"/><rect x="1596.5" y="718.5" width="17" height="14" rx="3" fill="#fdfdfd" stroke="#d4d4d8"/><path d="M1601.6 721 h3 q-2.4 4.4 0 8.9 h-3 q-3.6 -4.5 0 -8.9 z M1608 721 h3.2 l-2.9 4.4 l3 4.5 h-3.2 l-3.6 -4.5 z" fill="#3a6e8e"/></svg>
<div class="a" style="left:464px;top:742px;width:1129px;height:23px;border:1px solid #a8a8b0;border-right-color:#fcfcff;border-bottom-color:#fcfcff"></div>
<div class="t ar" style="left:467.5px;top:745px">285nm 2.508Abs</div>
<svg class="a" style="left:1597px;top:740px" width="20" height="26" viewBox="1597 740 20 26"><rect x="1598.5" y="741.5" width="17" height="23" rx="3" fill="#fdfdfd" stroke="#d4d4d8"/><path d="M1600.8 745.9 L1606.9 749.6 L1612.9 745.9 V749.2 L1606.9 752.9 L1600.8 749.2 Z M1600.8 753 L1606.9 756.7 L1612.9 753 V756.3 L1606.9 760 L1600.8 756.3 Z" fill="#3a6e8e"/></svg>
<div class="t ar" style="left:1623px;top:97px">Sample ID:</div>
<div class="a" style="left:1699px;top:93px;width:146px;height:23px;background:#fff;border-bottom:2px solid #0b63c4;border-radius:2px"></div>
<div class="a" style="left:1741px;top:95px;width:62px;height:17px;background:#0078d7"></div>
<div class="t ar" style="left:1741px;top:97px;width:62px;text-align:center;color:#fff">C09 10 B</div>
<div class="t" style="left:1851px;top:97px;font-size:15px;font-weight:bold">Pedestal</div>
<div class="t ar" style="left:1648px;top:137px">Type:</div>
<div class="a" style="left:1698px;top:132px;width:123px;height:24px;background:#f0f0f0;border-bottom:1px solid #cfcfcf"></div>
<div class="a" style="left:1698px;top:132px;width:106px;height:23px;background:#7cfc00"></div>
<div class="t ar" style="left:1701px;top:137px">DNA</div>
<svg class="a" style="left:1810px;top:142px" width="7" height="4"><polygon points="0.5,0.3 6.1,0.3 3.3,3.4" fill="#111"/></svg>
<div class="a" style="left:1828px;top:132px;width:70px;height:24px;background:#f0f0f0;border:1px solid #dcdcdc;border-bottom-color:#9a9a9a;border-radius:2px"></div>
<div class="t ar" style="left:1830px;top:137px">50.00</div>
<div class="t ar" style="left:1645px;top:172px">Conc.</div>
<div class="a" style="left:1698px;top:170px;width:123px;height:21px;background:#7cfc00;border-bottom:1px solid #8a8a8a"></div>
<div class="t" style="left:1698px;top:173px;width:121px;text-align:right;font-size:14.67px;font-weight:bold">334.2</div>
<div class="a" style="left:1827px;top:167px;width:72px;height:26px;background:#fff;border:1px solid #d0d0d0;border-bottom-color:#a8a8a8;border-radius:3px"></div>
<div class="t" style="left:1831px;top:173px;font-size:14.67px;font-weight:bold">ng/µl</div>
<svg class="a" style="left:1885px;top:177px" width="11" height="7"><path d="M1 1 L5.5 5.5 L10 1" fill="none" stroke="#444" stroke-width="1"/></svg>
<div class="t ar" style="left:1618px;top:206px;width:199px;text-align:right">A260 (10 mm path)</div>
<div class="a" style="left:1827px;top:203px;width:72px;height:21px;border:1px solid #a9a9b4;border-right-color:#fbfbff;border-bottom-color:#fbfbff;background:#f0f0fa"></div>
<div class="t" style="left:1827px;top:206px;width:66px;text-align:right;font-size:14.67px;font-weight:bold">6.684</div>
<div class="t ar" style="left:1618px;top:236px;width:199px;text-align:right">A280 (10 mm path)</div>
<div class="a" style="left:1827px;top:233px;width:72px;height:21px;border:1px solid #a9a9b4;border-right-color:#fbfbff;border-bottom-color:#fbfbff;background:#f0f0fa"></div>
<div class="t" style="left:1827px;top:236px;width:66px;text-align:right;font-size:14.67px;font-weight:bold">3.490</div>
<div class="t ar" style="left:1618px;top:266px;width:199px;text-align:right">260 / 280</div>
<div class="a" style="left:1827px;top:263px;width:72px;height:21px;border:1px solid #a9a9b4;border-right-color:#fbfbff;border-bottom-color:#fbfbff;background:#f0f0fa"></div>
<div class="t" style="left:1827px;top:266px;width:66px;text-align:right;font-size:14.67px;font-weight:bold">1.92</div>
<div class="t ar" style="left:1618px;top:296px;width:199px;text-align:right">260 / 230</div>
<div class="a" style="left:1827px;top:293px;width:72px;height:21px;border:1px solid #a9a9b4;border-right-color:#fbfbff;border-bottom-color:#fbfbff;background:#f0f0fa"></div>
<div class="t" style="left:1827px;top:296px;width:66px;text-align:right;font-size:14.67px;font-weight:bold">2.23</div>
<svg class="a" style="left:1670px;top:330px" width="13" height="13" viewBox="0 0 13 13"><rect x="0" y="0" width="13" height="13" rx="2.5" fill="#0b63c4"/><path d="M3.2 6.8 L5.4 9 L9.9 4.2" fill="none" stroke="#fff" stroke-width="1.2"/></svg>
<div class="t ar" style="left:1689px;top:329px">Baseline correction</div>
<div class="a" style="left:1828px;top:325px;width:42px;height:23px;background:#fff;border-bottom:1px solid #9a9a9a;border-radius:2px"></div>
<div class="t ar" style="left:1828px;top:328px;width:42px;text-align:center">340</div>
<div class="t ar" style="left:1876px;top:328px">nm</div>
<div class="a" style="left:464px;top:776px;width:1453px;height:228px;border:1px solid #000"></div>
<div class="a" style="left:465px;top:777px;width:1451px;height:226px;border-top:1px solid #9c9c9c;border-left:1px solid #9c9c9c"></div>
<div class="a" style="left:466px;top:778px;width:1118px;height:24px;background:#fff;border-bottom:1px solid #b8b8b8"></div>
<div class="a" style="left:466px;top:802px;width:1118px;height:189px;background:#fff"></div>
<div class="a" style="left:466px;top:970px;width:1118px;height:21px;background:#0078d7"></div>
<div class="a" style="left:466px;top:822px;width:1118px;height:1px;background:#a6a6a6"></div>
<div class="a" style="left:466px;top:843px;width:1118px;height:1px;background:#a6a6a6"></div>
<div class="a" style="left:466px;top:864px;width:1118px;height:1px;background:#a6a6a6"></div>
<div class="a" style="left:466px;top:885px;width:1118px;height:1px;background:#a6a6a6"></div>
<div class="a" style="left:466px;top:906px;width:1118px;height:1px;background:#a6a6a6"></div>
<div class="a" style="left:466px;top:927px;width:1118px;height:1px;background:#a6a6a6"></div>
<div class="a" style="left:466px;top:948px;width:1118px;height:1px;background:#a6a6a6"></div>
<div class="a" style="left:466px;top:969px;width:1118px;height:1px;background:#a6a6a6"></div>
<div class="a" style="left:466px;top:990px;width:1118px;height:1px;background:#a6a6a6"></div>
<div class="a" style="left:506px;top:779px;width:1px;height:22px;background:#e2e2e2"></div>
<div class="a" style="left:506px;top:802px;width:1px;height:189px;background:#a6a6a6"></div>
<div class="a" style="left:607px;top:779px;width:1px;height:22px;background:#e2e2e2"></div>
<div class="a" style="left:607px;top:802px;width:1px;height:189px;background:#a6a6a6"></div>
<div class="a" style="left:712px;top:779px;width:1px;height:22px;background:#e2e2e2"></div>
<div class="a" style="left:712px;top:802px;width:1px;height:189px;background:#a6a6a6"></div>
<div class="a" style="left:840px;top:779px;width:1px;height:22px;background:#e2e2e2"></div>
<div class="a" style="left:840px;top:802px;width:1px;height:189px;background:#a6a6a6"></div>
<div class="a" style="left:952px;top:779px;width:1px;height:22px;background:#e2e2e2"></div>
<div class="a" style="left:952px;top:802px;width:1px;height:189px;background:#a6a6a6"></div>
<div class="a" style="left:1010px;top:779px;width:1px;height:22px;background:#e2e2e2"></div>
<div class="a" style="left:1010px;top:802px;width:1px;height:189px;background:#a6a6a6"></div>
<div class="a" style="left:1115px;top:779px;width:1px;height:22px;background:#e2e2e2"></div>
<div class="a" style="left:1115px;top:802px;width:1px;height:189px;background:#a6a6a6"></div>
<div class="a" style="left:1220px;top:779px;width:1px;height:22px;background:#e2e2e2"></div>
<div class="a" style="left:1220px;top:802px;width:1px;height:189px;background:#a6a6a6"></div>
<div class="a" style="left:1305px;top:779px;width:1px;height:22px;background:#e2e2e2"></div>
<div class="a" style="left:1305px;top:802px;width:1px;height:189px;background:#a6a6a6"></div>
<div class="a" style="left:1390px;top:779px;width:1px;height:22px;background:#e2e2e2"></div>
<div class="a" style="left:1390px;top:802px;width:1px;height:189px;background:#a6a6a6"></div>
<div class="a" style="left:1508px;top:779px;width:1px;height:22px;background:#e2e2e2"></div>
<div class="a" style="left:1508px;top:802px;width:1px;height:189px;background:#a6a6a6"></div>
<div class="a" style="left:1583px;top:779px;width:1px;height:22px;background:#e2e2e2"></div>
<div class="a" style="left:1583px;top:802px;width:1px;height:189px;background:#a6a6a6"></div>
<div class="t ar" style="left:473px;top:783px">#</div>
<div class="t ar" style="left:514px;top:783px">Sample ID</div>
<div class="t ar" style="left:615px;top:783px">User name</div>
<div class="t ar" style="left:720px;top:783px">Date and Time</div>
<div class="t ar" style="left:848px;top:783px">Nucleic Acid</div>
<div class="t ar" style="left:960px;top:783px">Unit</div>
<div class="t ar" style="left:1018px;top:783px">A260 (Abs)</div>
<div class="t ar" style="left:1123px;top:783px">A280 (Abs)</div>
<div class="t ar" style="left:1228px;top:783px">260/280</div>
<div class="t ar" style="left:1313px;top:783px">260/230</div>
<div class="t ar" style="left:1398px;top:783px">Sample Type</div>
<div class="t ar" style="left:1516px;top:783px">Factor</div>
<div class="t ar" style="left:470px;top:806px;color:#000">1</div>
<div class="t ar" style="left:611px;top:806px;color:#000">TP-SSV</div>
<div class="t ar" style="left:716px;top:806px;color:#000">26.11.2024 08:30</div>
<div class="t ar" style="left:844px;top:806px;color:#000">34.4</div>
<div class="t ar" style="left:956px;top:806px;color:#000">ng/µl</div>
<div class="t ar" style="left:1014px;top:806px;color:#000">0.687</div>
<div class="t ar" style="left:1119px;top:806px;color:#000">0.360</div>
<div class="t ar" style="left:1224px;top:806px;color:#000">1.91</div>
<div class="t ar" style="left:1309px;top:806px;color:#000">2.01</div>
<div class="t ar" style="left:1394px;top:806px;color:#000">DNA</div>
<div class="t ar" style="left:1512px;top:806px;color:#000">50.00</div>
<div class="t ar" style="left:470px;top:827px;color:#000">2</div>
<div class="t ar" style="left:611px;top:827px;color:#000">TP-SSV</div>
<div class="t ar" style="left:716px;top:827px;color:#000">26.11.2024 08:31</div>
<div class="t ar" style="left:844px;top:827px;color:#000">-0.2</div>
<div class="t ar" style="left:956px;top:827px;color:#000">ng/µl</div>
<div class="t ar" style="left:1014px;top:827px;color:#000">-0.004</div>
<div class="t ar" style="left:1119px;top:827px;color:#000">-0.004</div>
<div class="t ar" style="left:1224px;top:827px;color:#000">1.07</div>
<div class="t ar" style="left:1309px;top:827px;color:#000">5.07</div>
<div class="t ar" style="left:1394px;top:827px;color:#000">DNA</div>
<div class="t ar" style="left:1512px;top:827px;color:#000">50.00</div>
<div class="t ar" style="left:470px;top:848px;color:#000">3</div>
<div class="t ar" style="left:510px;top:848px;color:#000">C08</div>
<div class="t ar" style="left:611px;top:848px;color:#000">TP-SSV</div>
<div class="t ar" style="left:716px;top:848px;color:#000">26.11.2024 09:11</div>
<div class="t ar" style="left:844px;top:848px;color:#000">241.0</div>
<div class="t ar" style="left:956px;top:848px;color:#000">ng/µl</div>
<div class="t ar" style="left:1014px;top:848px;color:#000">4.819</div>
<div class="t ar" style="left:1119px;top:848px;color:#000">2.528</div>
<div class="t ar" style="left:1224px;top:848px;color:#000">1.91</div>
<div class="t ar" style="left:1309px;top:848px;color:#000">2.23</div>
<div class="t ar" style="left:1394px;top:848px;color:#000">DNA</div>
<div class="t ar" style="left:1512px;top:848px;color:#000">50.00</div>
<div class="t ar" style="left:470px;top:869px;color:#000">4</div>
<div class="t ar" style="left:510px;top:869px;color:#000">C07</div>
<div class="t ar" style="left:611px;top:869px;color:#000">TP-SSV</div>
<div class="t ar" style="left:716px;top:869px;color:#000">26.11.2024 09:13</div>
<div class="t ar" style="left:844px;top:869px;color:#000">365.7</div>
<div class="t ar" style="left:956px;top:869px;color:#000">ng/µl</div>
<div class="t ar" style="left:1014px;top:869px;color:#000">7.313</div>
<div class="t ar" style="left:1119px;top:869px;color:#000">3.814</div>
<div class="t ar" style="left:1224px;top:869px;color:#000">1.92</div>
<div class="t ar" style="left:1309px;top:869px;color:#000">2.25</div>
<div class="t ar" style="left:1394px;top:869px;color:#000">DNA</div>
<div class="t ar" style="left:1512px;top:869px;color:#000">50.00</div>
<div class="t ar" style="left:470px;top:890px;color:#000">5</div>
<div class="t ar" style="left:510px;top:890px;color:#000">C14 B</div>
<div class="t ar" style="left:611px;top:890px;color:#000">TP-SSV</div>
<div class="t ar" style="left:716px;top:890px;color:#000">26.11.2024 09:16</div>
<div class="t ar" style="left:844px;top:890px;color:#000">393.2</div>
<div class="t ar" style="left:956px;top:890px;color:#000">ng/µl</div>
<div class="t ar" style="left:1014px;top:890px;color:#000">7.864</div>
<div class="t ar" style="left:1119px;top:890px;color:#000">4.111</div>
<div class="t ar" style="left:1224px;top:890px;color:#000">1.91</div>
<div class="t ar" style="left:1309px;top:890px;color:#000">2.24</div>
<div class="t ar" style="left:1394px;top:890px;color:#000">DNA</div>
<div class="t ar" style="left:1512px;top:890px;color:#000">50.00</div>
<div class="t ar" style="left:470px;top:911px;color:#000">6</div>
<div class="t ar" style="left:510px;top:911px;color:#000">C13 A</div>
<div class="t ar" style="left:611px;top:911px;color:#000">TP-SSV</div>
<div class="t ar" style="left:716px;top:911px;color:#000">26.11.2024 09:18</div>
<div class="t ar" style="left:844px;top:911px;color:#000">424.5</div>
<div class="t ar" style="left:956px;top:911px;color:#000">ng/µl</div>
<div class="t ar" style="left:1014px;top:911px;color:#000">8.491</div>
<div class="t ar" style="left:1119px;top:911px;color:#000">4.431</div>
<div class="t ar" style="left:1224px;top:911px;color:#000">1.92</div>
<div class="t ar" style="left:1309px;top:911px;color:#000">2.27</div>
<div class="t ar" style="left:1394px;top:911px;color:#000">DNA</div>
<div class="t ar" style="left:1512px;top:911px;color:#000">50.00</div>
<div class="t ar" style="left:470px;top:932px;color:#000">7</div>
<div class="t ar" style="left:510px;top:932px;color:#000">C06</div>
<div class="t ar" style="left:611px;top:932px;color:#000">TP-SSV</div>
<div class="t ar" style="left:716px;top:932px;color:#000">26.11.2024 09:20</div>
<div class="t ar" style="left:844px;top:932px;color:#000">502.3</div>
<div class="t ar" style="left:956px;top:932px;color:#000">ng/µl</div>
<div class="t ar" style="left:1014px;top:932px;color:#000">10.045</div>
<div class="t ar" style="left:1119px;top:932px;color:#000">5.319</div>
<div class="t ar" style="left:1224px;top:932px;color:#000">1.89</div>
<div class="t ar" style="left:1309px;top:932px;color:#000">1.99</div>
<div class="t ar" style="left:1394px;top:932px;color:#000">DNA</div>
<div class="t ar" style="left:1512px;top:932px;color:#000">50.00</div>
<div class="t ar" style="left:470px;top:953px;color:#000">8</div>
<div class="t ar" style="left:510px;top:953px;color:#000">C05</div>
<div class="t ar" style="left:611px;top:953px;color:#000">TP-SSV</div>
<div class="t ar" style="left:716px;top:953px;color:#000">26.11.2024 09:22</div>
<div class="t ar" style="left:844px;top:953px;color:#000">414.5</div>
<div class="t ar" style="left:956px;top:953px;color:#000">ng/µl</div>
<div class="t ar" style="left:1014px;top:953px;color:#000">8.289</div>
<div class="t ar" style="left:1119px;top:953px;color:#000">4.324</div>
<div class="t ar" style="left:1224px;top:953px;color:#000">1.92</div>
<div class="t ar" style="left:1309px;top:953px;color:#000">2.25</div>
<div class="t ar" style="left:1394px;top:953px;color:#000">DNA</div>
<div class="t ar" style="left:1512px;top:953px;color:#000">50.00</div>
<div class="t ar" style="left:470px;top:974px;color:#fff">9</div>
<div class="t ar" style="left:510px;top:974px;color:#fff">C09 10 B</div>
<div class="t ar" style="left:611px;top:974px;color:#fff">TP-SSV</div>
<div class="t ar" style="left:716px;top:974px;color:#fff">26.11.2024 09:25</div>
<div class="t ar" style="left:844px;top:974px;color:#fff">334.2</div>
<div class="t ar" style="left:956px;top:974px;color:#fff">ng/µl</div>
<div class="t ar" style="left:1014px;top:974px;color:#fff">6.684</div>
<div class="t ar" style="left:1119px;top:974px;color:#fff">3.490</div>
<div class="t ar" style="left:1224px;top:974px;color:#fff">1.92</div>
<div class="t ar" style="left:1309px;top:974px;color:#fff">2.23</div>
<div class="t ar" style="left:1394px;top:974px;color:#fff">DNA</div>
<div class="t ar" style="left:1512px;top:974px;color:#fff">50.00</div>
<div id="status" class="a"></div>
<svg class="a" style="left:51px;top:1012px" width="18" height="18" viewBox="0 0 18 18">
<path d="M9 0.8 Q12 3 16.2 3.2 Q16.8 11.5 9 17 Q1.2 11.5 1.8 3.2 Q6 3 9 0.8 Z" fill="#a9b3ab" stroke="#7d8a80" stroke-width="0.8"/>
<path d="M9 2.6 Q11.6 4.3 14.7 4.6 Q15 10.8 9 15.2 Q3 10.8 3.3 4.6 Q6.4 4.3 9 2.6 Z" fill="#38b45a"/>
<path d="M5.8 8.8 L8.2 11.2 L12.4 6.4" fill="none" stroke="#fff" stroke-width="1.6"/>
</svg>
<div class="t" style="left:1866px;top:1016px;font-size:11.6px;letter-spacing:-0.75px;color:#111">TP-SSV</div>
<div id="taskbar" class="a"></div>
<svg class="a" style="left:10px;top:1034px" width="60" height="44" viewBox="0 0 1789 1312">
<defs><linearGradient id="gc" x1="0" y1="0" x2="0" y2="1"><stop offset="0" stop-color="#b9d3f3"/><stop offset="0.45" stop-color="#d4e4f6"/><stop offset="0.8" stop-color="#c3d9f3"/><stop offset="1" stop-color="#8fb6ea"/></linearGradient></defs>
<path d="M360 950 Q270 940 270 830 Q270 720 400 690 Q440 520 600 510 Q760 510 800 640 Q960 640 980 790 Q985 940 880 950 Z" fill="url(#gc)"/>
<path d="M560 720 Q640 640 760 650" fill="none" stroke="#a9c6ee" stroke-width="18" opacity="0.8"/>
<circle cx="835" cy="355" r="240" fill="#c62c1c"/>
</svg>
<div class="t" style="left:33.5px;top:1041px;font-size:11.5px;color:#fff;width:9px;text-align:center">1</div>
<div class="t" style="left:50px;top:1042.5px;font-size:11.8px;color:#222">6°C</div>
<div class="t" style="left:50px;top:1058px;font-size:12.8px;letter-spacing:-0.15px;color:#555">Mostly cloudy</div>
<svg class="a" style="left:727px;top:1045px" width="24" height="24" viewBox="0 0 24 24">
<defs><linearGradient id="gw" x1="0" y1="0" x2="1" y2="1"><stop offset="0" stop-color="#36b8f5"/><stop offset="1" stop-color="#0a6fd6"/></linearGradient></defs>
<rect x="0" y="0" width="10.8" height="10.8" fill="url(#gw)"/><rect x="12" y="0" width="10.8" height="10.8" fill="url(#gw)"/><rect x="0" y="12" width="10.8" height="10.8" fill="url(#gw)"/><rect x="12" y="12" width="10.8" height="10.8" fill="url(#gw)"/></svg>
<div class="a" style="left:763px;top:1040px;width:219px;height:32px;border-radius:16px;background:#f4f7fd;border:1px solid #d3dbea;box-shadow:0 1px 1px rgba(120,140,180,.25)"></div>
<svg class="a" style="left:774px;top:1047px" width="17" height="17" viewBox="0 0 17 17"><circle cx="7" cy="7" r="5.4" fill="none" stroke="#222" stroke-width="1.5"/><path d="M11 11 L15.5 15.5" stroke="#222" stroke-width="1.7" stroke-linecap="round"/></svg>
<div class="t" style="left:800px;top:1049.5px;font-size:13px;color:#5a5a5a">Search</div>
<svg class="a" style="left:920px;top:1034px" width="70" height="46" viewBox="0 0 463 305">
<path d="M72 100 Q80 76 106 80 L214 174 L186 204 Z" fill="#f2c21c" stroke="#c0900a" stroke-width="4"/><path d="M92 88 L200 182" stroke="#fbe27a" stroke-width="7"/>
<path d="M72 100 Q80 76 106 80 L126 98 L94 122 Z" fill="#f8dc6a" stroke="#c79a10" stroke-width="3"/>
<path d="M120 105 L140 95" stroke="#b98a08" stroke-width="5"/>
<path d="M185 200 L205 180 L214 198 Z" fill="#1a1a5c"/>
<path d="M212 194 L250 156 L278 190 L320 156 L346 190 L376 160" fill="none" stroke="#17175a" stroke-width="13" stroke-linejoin="miter"/>
</svg>
<svg class="a" style="left:994px;top:1044px" width="28" height="26" viewBox="0 0 28 26">
<rect x="8" y="1" width="18" height="16" rx="2" fill="#fafafa" stroke="#dcdcdc" stroke-width="0.6"/>
<rect x="1.5" y="7" width="17" height="16" rx="2" fill="#2b2b2b"/>
<rect x="8" y="7" width="10.5" height="10" fill="#c2c2c2"/>
</svg>
<svg class="a" style="left:1076px;top:1036px" width="128" height="42" viewBox="0 0 1920 630">
<defs>
<linearGradient id="ed1" x1="0" y1="0.3" x2="1" y2="0.2"><stop offset="0" stop-color="#2aa7e6"/><stop offset="0.45" stop-color="#33c3e0"/><stop offset="1" stop-color="#6be352"/></linearGradient>
<linearGradient id="ed2" x1="0" y1="0" x2="0.8" y2="1"><stop offset="0" stop-color="#2297e6"/><stop offset="0.6" stop-color="#176cc4"/><stop offset="1" stop-color="#123f8c"/></linearGradient>
<linearGradient id="apb" x1="0" y1="0" x2="1" y2="0"><stop offset="0" stop-color="#b4c1e6"/><stop offset="0.5" stop-color="#8ea4da"/><stop offset="1" stop-color="#6883c6"/></linearGradient>
<linearGradient id="pal" x1="0" y1="0" x2="0.6" y2="1"><stop offset="0" stop-color="#55c8f2"/><stop offset="1" stop-color="#1b86dc"/></linearGradient>
<linearGradient id="brs" x1="0" y1="0" x2="0" y2="1"><stop offset="0" stop-color="#c98322"/><stop offset="1" stop-color="#8a5414"/></linearGradient>
</defs>
<path d="M110 300 Q170 235 270 245 Q238 262 240 305 Q252 375 335 392 Q395 400 440 395 Q400 480 290 482 Q120 470 110 300 Z" fill="url(#ed2)"/>
<path d="M110 300 Q105 160 240 120 Q380 90 455 200 Q495 290 440 340 Q400 365 360 345 Q330 320 330 295 Q320 245 270 245 Q170 240 110 300 Z" fill="url(#ed1)"/>
<path d="M236 330 Q270 395 345 396 Q400 402 440 395 Q405 478 300 482 Q215 465 205 385 Z" fill="#124a9c" opacity="0.7"/>
<rect x="660" y="20" width="566" height="570" rx="60" fill="#eef1fa" stroke="#e3e8f4" stroke-width="6"/>
<rect x="765" y="120" width="360" height="358" fill="url(#apb)"/>
<rect x="1105" y="120" width="20" height="358" fill="#51689f"/>
<path d="M830 140 H1060 Q1092 150 1076 186 Q1060 216 1020 216 H860 Q815 216 800 180 Q795 150 830 140 Z" fill="#040406"/>
<path d="M860 364 H1020 Q1076 374 1086 410 Q1086 446 1050 452 H820 Q780 442 790 406 Q805 370 860 364 Z" fill="#040406"/>
<path d="M870 226 H1000 Q985 300 1010 360 H860 Q890 300 870 226 Z" fill="#3b4aa2"/>
<ellipse cx="935" cy="298" rx="36" ry="18" fill="#cbdaf8"/>
<rect x="830" y="545" width="232" height="36" rx="18" fill="#1a6fd2"/>
<path d="M1440 335 Q1435 190 1580 145 Q1730 120 1768 250 Q1780 340 1700 360 Q1660 370 1665 420 Q1665 470 1610 468 Q1560 465 1560 410 Q1555 370 1510 390 Q1450 400 1440 335 Z" fill="url(#pal)"/>
<circle cx="1492" cy="305" r="26" fill="#e0502c"/><circle cx="1535" cy="228" r="26" fill="#2fa83a"/><circle cx="1612" cy="200" r="24" fill="#f0c81e"/>
<path d="M1612 296 l8 18 18 8 -18 8 -8 18 -8 -18 -18 -8 18 -8 z" fill="#ffffff"/>
<polygon points="1690,290 1726,290 1721,472 1694,472" fill="url(#brs)"/>
<polygon points="1668,246 1738,246 1729,296 1684,296" fill="#ead9b6"/>
<rect x="1668" y="240" width="70" height="14" fill="#f6ecd4"/>
<rect x="1562" y="545" width="84" height="36" rx="18" fill="#8a8e98"/>
</svg>
<svg class="a" style="left:1689px;top:1051px" width="13" height="9" viewBox="0 0 13 9"><path d="M1.2 7.5 L6.5 2 L11.8 7.5" fill="none" stroke="#222" stroke-width="1.3"/></svg>
<div class="t" style="left:1723px;top:1051px;font-size:11.6px;letter-spacing:-0.7px;color:#222">FRA</div>
<svg class="a" style="left:1762px;top:1047px" width="19" height="18" viewBox="0 0 19 18" fill="none" stroke="#222" stroke-width="1.1">
<rect x="1" y="2" width="11.5" height="10" rx="1"/><path d="M7 12 V16 M4 16.3 H13"/>
<rect x="12.8" y="0.8" width="3.6" height="5.4" rx="1" fill="#dfe9f8"/><path d="M14.6 6.2 V16.5"/></svg>
<svg class="a" style="left:1786px;top:1048px" width="19" height="16" viewBox="0 0 19 16" fill="none" stroke="#222" stroke-width="1.1">
<path d="M1 5.5 H4 L8 2 V14 L4 10.5 H1 Z"/><path d="M10.5 5.5 Q12 8 10.5 10.5 M12.8 3.8 Q15.3 8 12.8 12.2 M15.1 2 Q18.6 8 15.1 14"/></svg>
<div class="t" style="left:1800px;top:1042px;width:77px;text-align:right;font-size:11.6px;color:#222">09:25</div>
<div class="t" style="left:1800px;top:1058px;width:77px;text-align:right;font-size:11.6px;color:#222">26.11.2024</div>
<svg class="a" style="left:1884px;top:1048px" width="16" height="18" viewBox="0 0 16 18">
<path d="M8 1 Q13 1 13 6.5 V10 L15 13 H1 L3 10 V6.5 Q3 1 8 1 Z" fill="#0d4fb4"/><path d="M5.5 14.5 H10.5 Q10 16.8 8 16.8 Q6 16.8 5.5 14.5 Z" fill="#0d4fb4"/></svg>
</body></html>
